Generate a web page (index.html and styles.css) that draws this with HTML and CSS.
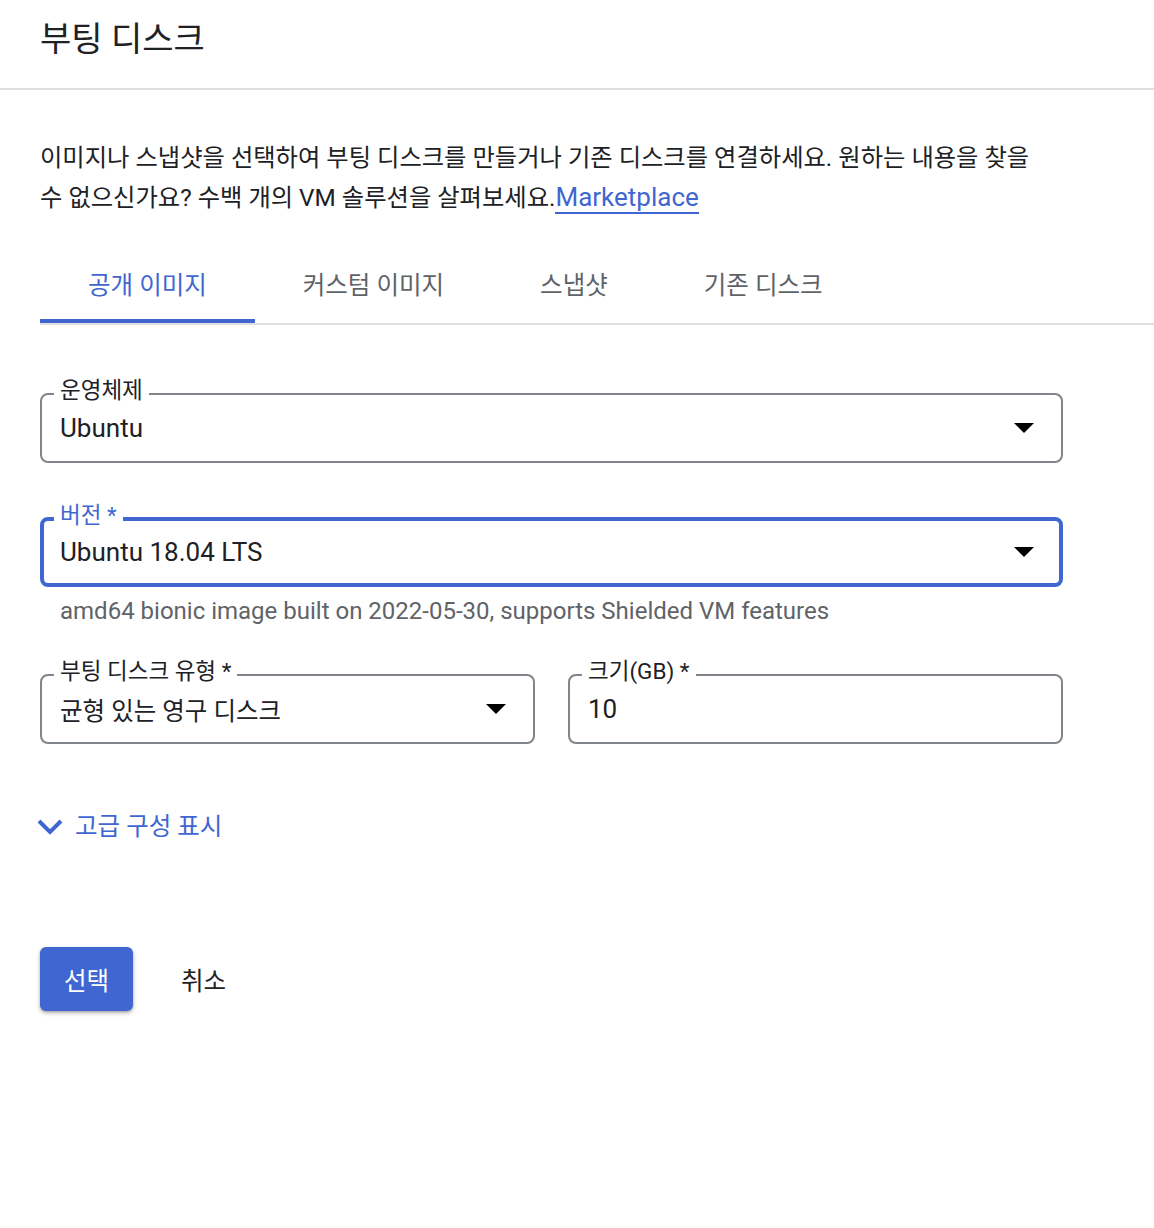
FILE: index.html
```html
<!DOCTYPE html>
<html lang="ko">
<head>
<meta charset="utf-8">
<title>부팅 디스크</title>
<link rel="stylesheet" href="styles.css">
</head>
<body>
<header class="header">
  <h1 class="title">부팅 디스크</h1>
</header>
<main class="main">
  <p class="desc"><span>이미지나 스냅샷을 선택하여 부팅 디스크를 만들거나 기존 디스크를 연결하세요. 원하는 내용을 찾을</span> <span>수 없으신가요? 수백 개의 VM 솔루션을 살펴보세요.</span><a class="link" href="#">Marketplace</a></p>

  <nav class="tabs">
    <div class="tab active">공개 이미지</div>
    <div class="tab">커스텀 이미지</div>
    <div class="tab">스냅샷</div>
    <div class="tab">기존 디스크</div>
  </nav>

  <section class="form">
    <div class="field">
      <span class="label">운영체제</span>
      <span class="value">Ubuntu</span>
      <svg class="arrow" width="20" height="10" viewBox="0 0 20 10"><polygon points="0,0 20,0 10,10" fill="#000"/></svg>
    </div>

    <div class="field focused">
      <span class="label">버전 *</span>
      <span class="value">Ubuntu 18.04 LTS</span>
      <svg class="arrow" width="20" height="10" viewBox="0 0 20 10"><polygon points="0,0 20,0 10,10" fill="#000"/></svg>
    </div>
    <div class="hint">amd64 bionic image built on 2022-05-30, supports Shielded VM features</div>

    <div class="row">
      <div class="field">
        <span class="label">부팅 디스크 유형 *</span>
        <span class="value ko">균형 있는 영구 디스크</span>
        <svg class="arrow" width="20" height="10" viewBox="0 0 20 10"><polygon points="0,0 20,0 10,10" fill="#000"/></svg>
      </div>
      <div class="field">
        <span class="label">크기(GB) *</span>
        <span class="value">10</span>
      </div>
    </div>

    <div class="advanced">
      <svg class="chevron" width="28" height="18" viewBox="0 0 28 18"><polyline points="3,3 14,14 25,3" fill="none" stroke="#3f66d1" stroke-width="4"/></svg>
      <span>고급 구성 표시</span>
    </div>

    <div class="actions">
      <button class="btn primary">선택</button>
      <button class="btn text">취소</button>
    </div>
  </section>
</main>
</body>
</html>
```

FILE: styles.css
```css
* { box-sizing: border-box; }
html, body { margin: 0; padding: 0; background: #fff; }
body {
  font-family: Roboto, "Noto Sans CJK KR", sans-serif;
  color: #202124;
  width: 1154px;
  min-height: 1228px;
}
.header {
  height: 90px;
  border-bottom: 2px solid #e0e0e0;
  padding-left: 40px;
}
.title {
  margin: 0;
  font-weight: 400;
  font-size: 34px;
  line-height: 78px;
  color: #202124;
}
.main { padding-left: 40px; }
.desc {
  margin: 48px 0 0;
  width: 1002px;
  font-size: 24.3px;
  line-height: 40px;
  color: #202124;
  word-break: keep-all;
}
.link {
  font-size: 26px;
  line-height: 30px;
  color: #3f66d1;
  text-decoration: none;
  border-bottom: 2px solid #3f66d1;
}
.tabs {
  margin-top: 33px;
  display: flex;
  border-bottom: 2px solid #e0e0e0;
}
.tab {
  height: 72px;
  padding: 2px 48px 0;
  line-height: 66px;
  font-size: 24.5px;
  color: #5f6368;
  border-bottom: 4px solid transparent;
}
.tab.active { color: #3f66d1; border-bottom-color: #3f66d1; }
.form { width: 1023px; }
.field {
  position: relative;
  height: 70px;
  margin-top: 68px;
  border: 2px solid #80868b;
  border-radius: 8px;
  display: flex;
  align-items: center;
  padding: 0 27px 0 18px;
}
.field.focused {
  margin-top: 54px;
  border: 4px solid #3f66d1;
  padding: 0 25px 0 16px;
}
.label {
  position: absolute;
  top: -18px;
  left: 12px;
  padding: 0 6px;
  background: #fff;
  font-size: 22.5px;
  line-height: 26px;
  color: #202124;
}
.focused .label { top: -19px; left: 10px; color: #3f66d1; }
.value {
  flex: 1;
  font-size: 26px;
  color: #202124;
}
.value.ko { font-size: 24.5px; }
.arrow { flex: none; }
.hint {
  margin-top: 10px;
  padding-left: 20px;
  font-size: 24px;
  line-height: 28px;
  color: #5f6368;
}
.row {
  display: grid;
  grid-template-columns: 495px 495px;
  column-gap: 33px;
  margin-top: 49px;
}
.row .field { margin-top: 0; }
.advanced {
  margin-top: 67px;
  margin-left: -4px;
  display: flex;
  align-items: center;
  gap: 11px;
  font-size: 24.5px;
  line-height: 32px;
  color: #3f66d1;
}
.actions {
  margin-top: 104px;
  display: flex;
  align-items: center;
}
.btn {
  font-family: Roboto, "Noto Sans CJK KR", sans-serif;
  font-size: 24.5px;
  border: none;
  background: none;
  cursor: pointer;
}
.btn.primary {
  width: 93px;
  height: 64px;
  border-radius: 6px;
  background: #3f66d1;
  color: #fff;
  box-shadow: 0 2px 4px rgba(0,0,0,0.28), 0 1px 2px rgba(0,0,0,0.15);
}
.btn.text {
  margin-left: 48px;
  padding: 0;
  height: 64px;
  color: #202124;
}
```
